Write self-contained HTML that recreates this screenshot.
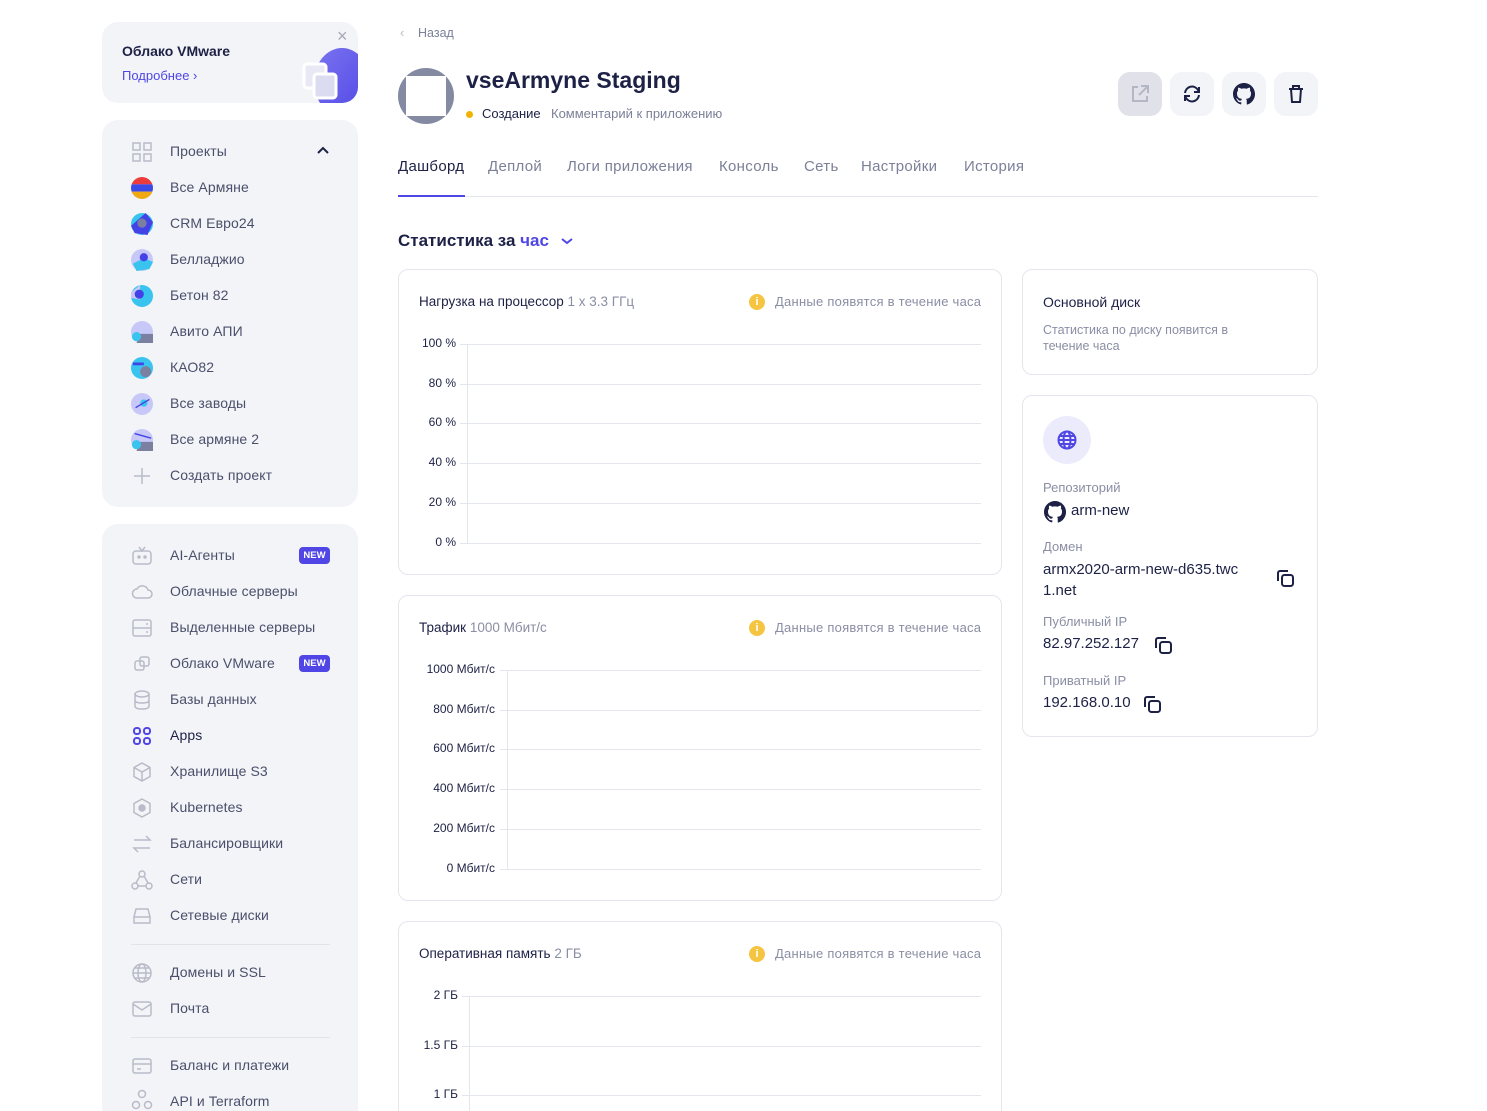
<!DOCTYPE html>
<html style="width:1487px;height:1111px;overflow:hidden"><head><meta charset="utf-8"><style>
*{margin:0;padding:0;box-sizing:border-box}
body{width:1487px;height:1111px;overflow:hidden;background:#fff;font-family:"Liberation Sans","Noto Sans CJK SC",sans-serif;color:#1c2145;position:relative}
.a{position:absolute}
.card{position:absolute;background:#f3f4f7;border-radius:16px}
.si{position:absolute;left:170px;font-size:14px;color:#4a4f6b;white-space:nowrap;letter-spacing:0.1px}
.ic{position:absolute;left:131px;width:22px;height:22px}
.new{position:absolute;left:299px;width:31px;height:17px;background:#4f46e5;border-radius:4px;color:#fff;font-size:9.5px;font-weight:bold;text-align:center;line-height:17px}
.box{position:absolute;border:1px solid #e4e6ee;border-radius:10px;background:#fff}
.tab{position:absolute;top:158px;font-size:15px;color:#7c8098;letter-spacing:0.3px}
.btn{position:absolute;top:72px;width:44px;height:44px;border-radius:12px;background:#f3f4f7;display:flex;align-items:center;justify-content:center}
.yl{position:absolute;font-size:12px;color:#1c2145;text-align:right;white-space:nowrap}
.gl{position:absolute;height:1px;background:#e4e6ee}
.vl{position:absolute;width:1px;background:#e4e6ee}
.lbl{position:absolute;left:1043px;font-size:13px;color:#8a8ea4}
.val{position:absolute;left:1043px;font-size:15px;color:#1c2145}
.note{position:absolute;left:775px;font-size:13px;color:#8a8ea4;letter-spacing:0.25px}
#wrap{position:absolute;left:0;top:0;width:1487px;height:1111px;overflow:hidden}
</style></head><body><div id="wrap">

<div class="card" style="left:102px;top:22px;width:256px;height:81px;overflow:hidden">
  <div class="a" style="left:20px;top:21px;font-size:14px;font-weight:bold;color:#1c2145">Облако VMware</div>
  <div class="a" style="left:20px;top:46px;font-size:13px;color:#4f46e5">Подробнее ›</div>
  <div class="a" style="left:235px;top:4px;font-size:18px;color:#a5a8b8">×</div>
  <svg class="a" style="left:190px;top:20px" width="66" height="61" viewBox="0 0 66 61">
    <defs><linearGradient id="g" x1="0" y1="0" x2="1" y2="1"><stop offset="0" stop-color="#7b74f0"/><stop offset="1" stop-color="#4f46e5"/></linearGradient></defs>
    <ellipse cx="50" cy="40" rx="28" ry="34" fill="url(#g)"/>
    <rect x="12" y="22" width="22" height="24" rx="3" fill="#e8e9f4" stroke="#fff" stroke-width="3"/>
    <rect x="22" y="32" width="22" height="24" rx="3" fill="#dcdcf0" stroke="#fff" stroke-width="3"/>
  </svg>
</div>

<div class="card" style="left:102px;top:120px;width:256px;height:387px"></div>
<svg class="ic" style="top:141px" viewBox="0 0 22 22" fill="none" stroke="#b8bbc8" stroke-width="1.5"><rect x="2" y="2" width="7" height="7"/><rect x="13" y="2" width="7" height="7"/><rect x="2" y="13" width="7" height="7"/><rect x="13" y="13" width="7" height="7"/></svg>
<div class="si" style="top:143px">Проекты</div>
<svg class="a" style="left:316px;top:145px" width="14" height="10" viewBox="0 0 14 10"><path d="M2 8l5-5 5 5" stroke="#1c2145" stroke-width="2" fill="none"/></svg>

<svg class="ic" style="top:177px" viewBox="0 0 24 24"><clipPath id="c0"><circle cx="12" cy="12" r="12"/></clipPath><g clip-path="url(#c0)"><rect width="24" height="8" fill="#ec3b3b"/><rect y="8" width="24" height="8" fill="#3b4ae6"/><rect y="16" width="24" height="8" fill="#f0a912"/></g></svg>
<div class="si" style="top:179px">Все Армяне</div>
<svg class="ic" style="top:213px" viewBox="0 0 24 24"><circle cx="12" cy="12" r="12" fill="#38c4ef"/><path d="M0 14L16 0 24 10 18 24 4 22z" fill="#4342e6"/><circle cx="12" cy="11" r="5" fill="#7c80a0"/></svg>
<div class="si" style="top:215px">CRM Евро24</div>
<svg class="ic" style="top:249px" viewBox="0 0 24 24"><circle cx="12" cy="12" r="12" fill="#c8c8f8"/><path d="M2 16L14 10 24 14 20 22 6 24z" fill="#38c4ef"/><circle cx="14" cy="9" r="4.5" fill="#4342e6"/></svg>
<div class="si" style="top:251px">Белладжио</div>
<svg class="ic" style="top:285px" viewBox="0 0 24 24"><circle cx="12" cy="12" r="12" fill="#38c4ef"/><path d="M0 8L10 0 10 16 0 14z" fill="#c8c8f8"/><circle cx="9" cy="10" r="5" fill="#4342e6"/></svg>
<div class="si" style="top:287px">Бетон 82</div>
<svg class="ic" style="top:321px" viewBox="0 0 24 24"><circle cx="12" cy="12" r="12" fill="#c8c8f8"/><path d="M10 14h14v10H6z" fill="#7c80a0"/><circle cx="6" cy="17" r="5" fill="#38c4ef"/></svg>
<div class="si" style="top:323px">Авито АПИ</div>
<svg class="ic" style="top:357px" viewBox="0 0 24 24"><circle cx="12" cy="12" r="12" fill="#38c4ef"/><rect x="2" y="6" width="12" height="3" fill="#4342e6"/><circle cx="16" cy="16" r="6" fill="#7c80a0"/></svg>
<div class="si" style="top:359px">КАО82</div>
<svg class="ic" style="top:393px" viewBox="0 0 24 24"><circle cx="12" cy="12" r="12" fill="#c8c8f8"/><circle cx="14" cy="11" r="4" fill="#38c4ef"/><path d="M5 16L20 7" stroke="#4342e6" stroke-width="1.5"/></svg>
<div class="si" style="top:395px">Все заводы</div>
<svg class="ic" style="top:429px" viewBox="0 0 24 24"><circle cx="12" cy="12" r="12" fill="#c8c8f8"/><path d="M10 14h14v10H6z" fill="#7c80a0"/><circle cx="6" cy="17" r="5" fill="#38c4ef"/><path d="M4 5L22 10" stroke="#4342e6" stroke-width="1.5"/></svg>
<div class="si" style="top:431px">Все армяне 2</div>
<svg class="ic" style="top:465px" viewBox="0 0 22 22"><path d="M11 3v16M3 11h16" stroke="#b8bbc8" stroke-width="1.5"/></svg>
<div class="si" style="top:467px">Создать проект</div>

<div class="card" style="left:102px;top:524px;width:256px;height:587px;border-radius:16px 16px 0 0"></div>
<svg class="ic" style="top:545px" viewBox="0 0 22 22" fill="none" stroke="#b8bbc8" stroke-width="1.5"><rect x="2" y="6" width="18" height="13" rx="3"/><path d="M8 2l3 4 3-4"/><circle cx="8" cy="12" r="1" fill="#b8bbc8"/><circle cx="14" cy="12" r="1" fill="#b8bbc8"/></svg>
<div class="si" style="top:547px">AI-Агенты</div><div class="new" style="top:547px">NEW</div>
<svg class="ic" style="top:581px" viewBox="0 0 22 22" fill="none" stroke="#b8bbc8" stroke-width="1.5"><path d="M6 17h11a4 4 0 0 0 0-8 6 6 0 0 0-11-1A4.5 4.5 0 0 0 6 17z"/></svg>
<div class="si" style="top:583px">Облачные серверы</div>
<svg class="ic" style="top:617px" viewBox="0 0 22 22" fill="none" stroke="#b8bbc8" stroke-width="1.5"><rect x="2" y="3" width="18" height="16" rx="2"/><path d="M2 11h18M15 7h2M15 15h2"/></svg>
<div class="si" style="top:619px">Выделенные серверы</div>
<svg class="ic" style="top:653px" viewBox="0 0 22 22" fill="none" stroke="#b8bbc8" stroke-width="1.5"><rect x="4" y="8" width="9" height="9" rx="2"/><rect x="9" y="4" width="9" height="9" rx="2"/></svg>
<div class="si" style="top:655px">Облако VMware</div><div class="new" style="top:655px">NEW</div>
<svg class="ic" style="top:689px" viewBox="0 0 22 22" fill="none" stroke="#b8bbc8" stroke-width="1.5"><ellipse cx="11" cy="5" rx="7" ry="3"/><path d="M4 5v12c0 2 3 3 7 3s7-1 7-3V5M4 11c0 2 3 3 7 3s7-1 7-3"/></svg>
<div class="si" style="top:691px">Базы данных</div>
<svg class="ic" style="top:725px" viewBox="0 0 22 22" fill="none" stroke="#4f46e5" stroke-width="2"><rect x="3" y="3" width="6" height="6" rx="2.5"/><rect x="13" y="3" width="6" height="6" rx="2.5"/><rect x="3" y="13" width="6" height="6" rx="2.5"/><rect x="13" y="13" width="6" height="6" rx="2.5"/></svg>
<div class="si" style="top:727px;color:#1c2145">Apps</div>
<svg class="ic" style="top:761px" viewBox="0 0 22 22" fill="none" stroke="#b8bbc8" stroke-width="1.5"><path d="M11 2l8 4.5v9L11 20l-8-4.5v-9zM3 6.5l8 4.5 8-4.5M11 11v9"/></svg>
<div class="si" style="top:763px">Хранилище S3</div>
<svg class="ic" style="top:797px" viewBox="0 0 22 22" fill="none" stroke="#b8bbc8" stroke-width="1.5"><path d="M11 2l8 4.5v9L11 20l-8-4.5v-9z"/><circle cx="11" cy="11" r="3" fill="#b8bbc8"/></svg>
<div class="si" style="top:799px">Kubernetes</div>
<svg class="ic" style="top:833px" viewBox="0 0 22 22" fill="none" stroke="#b8bbc8" stroke-width="1.5"><path d="M3 7h16l-4-4M19 15H3l4 4"/></svg>
<div class="si" style="top:835px">Балансировщики</div>
<svg class="ic" style="top:869px" viewBox="0 0 22 22" fill="none" stroke="#b8bbc8" stroke-width="1.5"><circle cx="11" cy="5" r="3"/><circle cx="4" cy="17" r="3"/><circle cx="18" cy="17" r="3"/><path d="M9 7l-4 7M13 7l4 7M7 17h8"/></svg>
<div class="si" style="top:871px">Сети</div>
<svg class="ic" style="top:905px" viewBox="0 0 22 22" fill="none" stroke="#b8bbc8" stroke-width="1.5"><path d="M3 12l2-8h12l2 8v6H3zM3 12h16"/></svg>
<div class="si" style="top:907px">Сетевые диски</div>
<div class="a" style="left:131px;top:944px;width:199px;height:1px;background:#e2e4ea"></div>
<svg class="ic" style="top:962px" viewBox="0 0 22 22" fill="none" stroke="#b8bbc8" stroke-width="1.5"><circle cx="11" cy="11" r="9"/><ellipse cx="11" cy="11" rx="4" ry="9"/><path d="M2 11h18M4 6h14M4 16h14"/></svg>
<div class="si" style="top:964px">Домены и SSL</div>
<svg class="ic" style="top:998px" viewBox="0 0 22 22" fill="none" stroke="#b8bbc8" stroke-width="1.5"><rect x="2" y="4" width="18" height="14" rx="2"/><path d="M2 6l9 6 9-6"/></svg>
<div class="si" style="top:1000px">Почта</div>
<div class="a" style="left:131px;top:1037px;width:199px;height:1px;background:#e2e4ea"></div>
<svg class="ic" style="top:1055px" viewBox="0 0 22 22" fill="none" stroke="#b8bbc8" stroke-width="1.5"><rect x="2" y="4" width="18" height="14" rx="2"/><path d="M2 9h18M6 14h4"/></svg>
<div class="si" style="top:1057px">Баланс и платежи</div>
<svg class="ic" style="top:1089px;height:22px" viewBox="0 0 22 22" fill="none" stroke="#b8bbc8" stroke-width="1.5"><circle cx="11" cy="5" r="3.5"/><circle cx="5" cy="16" r="3.5"/><circle cx="17" cy="16" r="3.5"/></svg>
<div class="si" style="top:1093px">API и Terraform</div>

<div class="a" style="left:400px;top:25px;font-size:13px;color:#b8bbc8">‹</div>
<div class="a" style="left:418px;top:26px;font-size:12.5px;color:#7c8098">Назад</div>
<div class="a" style="left:398px;top:68px;width:56px;height:56px;border-radius:50%;background:#858aa3"></div>
<div class="a" style="left:406px;top:76px;width:40px;height:40px;background:#fff"></div>
<div class="a" style="left:466px;top:67px;font-size:23px;font-weight:bold;color:#1c2145">vseArmyne Staging</div>
<div class="a" style="left:466px;top:111px;width:7px;height:7px;border-radius:50%;background:#f0b400"></div>
<div class="a" style="left:482px;top:106px;font-size:13px;color:#1c2145">Создание</div>
<div class="a" style="left:551px;top:106px;font-size:13px;color:#7c8098">Комментарий к приложению</div>

<div class="btn" style="left:1118px;background:#e1e2e9"><svg width="22" height="22" viewBox="0 0 22 22" fill="none" stroke="#b3b6c4" stroke-width="2"><path d="M9 4H4v14h14v-5M12 3h7v7M19 3l-9 9"/></svg></div>
<div class="btn" style="left:1170px"><svg width="22" height="22" viewBox="0 0 22 22" fill="none" stroke="#1c2145" stroke-width="2"><path d="M4 10a7 7 0 0 1 13-3l1 2M18 12a7 7 0 0 1-13 3l-1-2M18 4v5h-5M4 18v-5h5"/></svg></div>
<div class="btn" style="left:1222px"><svg width="22" height="22" viewBox="0 0 16 16"><path fill="#1c2145" d="M8 0C3.58 0 0 3.58 0 8c0 3.54 2.29 6.53 5.47 7.59.4.07.55-.17.55-.38v-1.33c-2.23.48-2.7-1.07-2.7-1.07-.36-.92-.89-1.17-.89-1.17-.73-.5.06-.49.06-.49.8.06 1.23.83 1.23.83.71 1.22 1.87.87 2.33.66.07-.52.28-.87.51-1.07-1.78-.2-3.65-.89-3.65-3.95 0-.87.31-1.59.82-2.15-.08-.2-.36-1.02.08-2.12 0 0 .67-.21 2.2.82a7.6 7.6 0 0 1 4 0c1.53-1.04 2.2-.82 2.2-.82.44 1.1.16 1.92.08 2.12.51.56.82 1.27.82 2.15 0 3.07-1.87 3.75-3.65 3.95.29.25.54.73.54 1.48v2.2c0 .21.15.46.55.38A8 8 0 0 0 16 8c0-4.42-3.58-8-8-8z"/></svg></div>
<div class="btn" style="left:1274px"><svg width="22" height="22" viewBox="0 0 22 22" fill="none" stroke="#1c2145" stroke-width="2"><path d="M4 6h14M8 6V3h6v3M6 6l1 13h8l1-13"/></svg></div>

<div class="tab" style="left:398px;color:#1c2145">Дашборд</div>
<div class="tab" style="left:488px">Деплой</div>
<div class="tab" style="left:567px">Логи приложения</div>
<div class="tab" style="left:719px">Консоль</div>
<div class="tab" style="left:804px">Сеть</div>
<div class="tab" style="left:861px">Настройки</div>
<div class="tab" style="left:964px">История</div>
<div class="a" style="left:398px;top:196px;width:920px;height:1px;background:#e4e6ee"></div>
<div class="a" style="left:398px;top:195px;width:67px;height:2px;background:#4f46e5"></div>

<div class="a" style="left:398px;top:231px;font-size:17px;font-weight:bold;color:#1c2145">Статистика за <span style="color:#4f46e5">час</span></div>
<svg class="a" style="left:561px;top:237px" width="12" height="8" viewBox="0 0 12 8"><path d="M1 2l5 4 5-4" stroke="#4f46e5" stroke-width="2" fill="none"/></svg>

<div class="box" style="left:398px;top:269px;width:604px;height:306px"></div>
<div class="a" style="left:419px;top:294px;font-size:13.5px;color:#1c2145">Нагрузка на процессор <span style="color:#8a8ea4">1 x 3.3 ГГц</span></div>
<div class="a" style="left:749px;top:294px;width:16px;height:16px;border-radius:50%;background:#f5c542;color:#fff;font-size:11px;font-weight:bold;text-align:center;line-height:16px">i</div>
<div class="note" style="top:294px">Данные появятся в течение часа</div>
<div class="vl" style="left:467px;top:344px;height:200px"></div>
<div class="gl" style="left:460px;top:344px;width:521px"></div><div class="yl" style="right:1031px;top:336px">100 %</div>
<div class="gl" style="left:460px;top:384px;width:521px"></div><div class="yl" style="right:1031px;top:376px">80 %</div>
<div class="gl" style="left:460px;top:423px;width:521px"></div><div class="yl" style="right:1031px;top:415px">60 %</div>
<div class="gl" style="left:460px;top:463px;width:521px"></div><div class="yl" style="right:1031px;top:455px">40 %</div>
<div class="gl" style="left:460px;top:503px;width:521px"></div><div class="yl" style="right:1031px;top:495px">20 %</div>
<div class="gl" style="left:460px;top:543px;width:521px"></div><div class="yl" style="right:1031px;top:535px">0 %</div>

<div class="box" style="left:398px;top:595px;width:604px;height:306px"></div>
<div class="a" style="left:419px;top:620px;font-size:13.5px;color:#1c2145">Трафик <span style="color:#8a8ea4">1000 Мбит/с</span></div>
<div class="a" style="left:749px;top:620px;width:16px;height:16px;border-radius:50%;background:#f5c542;color:#fff;font-size:11px;font-weight:bold;text-align:center;line-height:16px">i</div>
<div class="note" style="top:620px">Данные появятся в течение часа</div>
<div class="vl" style="left:507px;top:670px;height:200px"></div>
<div class="gl" style="left:500px;top:670px;width:481px"></div><div class="yl" style="right:992px;top:662px">1000 Мбит/с</div>
<div class="gl" style="left:500px;top:710px;width:481px"></div><div class="yl" style="right:992px;top:702px">800 Мбит/с</div>
<div class="gl" style="left:500px;top:749px;width:481px"></div><div class="yl" style="right:992px;top:741px">600 Мбит/с</div>
<div class="gl" style="left:500px;top:789px;width:481px"></div><div class="yl" style="right:992px;top:781px">400 Мбит/с</div>
<div class="gl" style="left:500px;top:829px;width:481px"></div><div class="yl" style="right:992px;top:821px">200 Мбит/с</div>
<div class="gl" style="left:500px;top:869px;width:481px"></div><div class="yl" style="right:992px;top:861px">0 Мбит/с</div>

<div class="box" style="left:398px;top:921px;width:604px;height:190px;border-bottom:none;border-radius:10px 10px 0 0"></div>
<div class="a" style="left:419px;top:946px;font-size:13.5px;color:#1c2145">Оперативная память <span style="color:#8a8ea4">2 ГБ</span></div>
<div class="a" style="left:749px;top:946px;width:16px;height:16px;border-radius:50%;background:#f5c542;color:#fff;font-size:11px;font-weight:bold;text-align:center;line-height:16px">i</div>
<div class="note" style="top:946px">Данные появятся в течение часа</div>
<div class="vl" style="left:469px;top:996px;height:115px"></div>
<div class="gl" style="left:462px;top:996px;width:519px"></div><div class="yl" style="right:1029px;top:988px">2 ГБ</div>
<div class="gl" style="left:462px;top:1046px;width:519px"></div><div class="yl" style="right:1029px;top:1038px">1.5 ГБ</div>
<div class="gl" style="left:462px;top:1095px;width:519px"></div><div class="yl" style="right:1029px;top:1087px">1 ГБ</div>

<div class="box" style="left:1022px;top:269px;width:296px;height:106px"></div>
<div class="a" style="left:1043px;top:294px;font-size:14px;color:#1c2145">Основной диск</div>
<div class="a" style="left:1043px;top:322px;width:230px;font-size:12.5px;line-height:16px;color:#8a8ea4">Статистика по диску появится в течение часа</div>

<div class="box" style="left:1022px;top:395px;width:296px;height:342px"></div>
<div class="a" style="left:1043px;top:416px;width:48px;height:48px;border-radius:50%;background:#ebebfb"></div>
<svg class="a" style="left:1056px;top:429px" width="22" height="22" viewBox="0 0 22 22" fill="none" stroke="#4f46e5" stroke-width="2"><circle cx="11" cy="11" r="8.5"/><ellipse cx="11" cy="11" rx="3.5" ry="8.5"/><path d="M2.5 11h17M4 7h14M4 15h14"/></svg>
<div class="lbl" style="top:480px">Репозиторий</div>
<svg class="a" style="left:1044px;top:501px" width="22" height="22" viewBox="0 0 16 16"><path fill="#1c2145" d="M8 0C3.58 0 0 3.58 0 8c0 3.54 2.29 6.53 5.47 7.59.4.07.55-.17.55-.38v-1.33c-2.23.48-2.7-1.07-2.7-1.07-.36-.92-.89-1.17-.89-1.17-.73-.5.06-.49.06-.49.8.06 1.23.83 1.23.83.71 1.22 1.87.87 2.33.66.07-.52.28-.87.51-1.07-1.78-.2-3.65-.89-3.65-3.95 0-.87.31-1.59.82-2.15-.08-.2-.36-1.02.08-2.12 0 0 .67-.21 2.2.82a7.6 7.6 0 0 1 4 0c1.53-1.04 2.2-.82 2.2-.82.44 1.1.16 1.92.08 2.12.51.56.82 1.27.82 2.15 0 3.07-1.87 3.75-3.65 3.95.29.25.54.73.54 1.48v2.2c0 .21.15.46.55.38A8 8 0 0 0 16 8c0-4.42-3.58-8-8-8z"/></svg>
<div class="a" style="left:1071px;top:502px;font-size:15px;color:#1c2145">arm-new</div>
<div class="lbl" style="top:539px">Домен</div>
<div class="val" style="top:559px;line-height:21px;white-space:nowrap">armx2020-arm-new-d635.twc<br>1.net</div>
<svg class="a" style="left:1276px;top:569px" width="19" height="19" viewBox="0 0 19 19" fill="none" stroke="#1c2145" stroke-width="2"><rect x="6" y="6" width="11" height="11" rx="2.5"/><path d="M2 12V4a2 2 0 0 1 2-2h8"/></svg>
<div class="lbl" style="top:614px">Публичный IP</div>
<div class="val" style="top:635px">82.97.252.127</div>
<svg class="a" style="left:1154px;top:636px" width="19" height="19" viewBox="0 0 19 19" fill="none" stroke="#1c2145" stroke-width="2"><rect x="6" y="6" width="11" height="11" rx="2.5"/><path d="M2 12V4a2 2 0 0 1 2-2h8"/></svg>
<div class="lbl" style="top:673px">Приватный IP</div>
<div class="val" style="top:694px">192.168.0.10</div>
<svg class="a" style="left:1143px;top:695px" width="19" height="19" viewBox="0 0 19 19" fill="none" stroke="#1c2145" stroke-width="2"><rect x="6" y="6" width="11" height="11" rx="2.5"/><path d="M2 12V4a2 2 0 0 1 2-2h8"/></svg>

</div></body></html>
